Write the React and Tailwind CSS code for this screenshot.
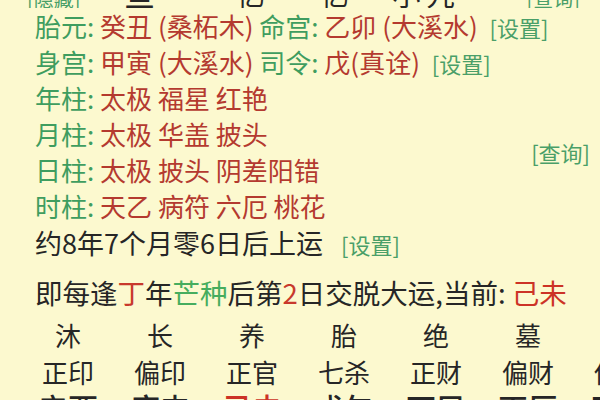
export default function App() {
  const lab = "text-[#3f9d5f]";
  const val = "text-[#b43a2f]";
  const link = "text-[#4a9f68] text-[22px] leading-none ml-[6px]";
  const row = "h-[36px] leading-[36px]";
  const cols = ["沐", "长", "养", "胎", "绝", "墓", "死"];
  const shen = ["正印", "偏印", "正官", "七杀", "正财", "偏财", "伤官"];
  const yun = ["辛酉", "庚申", "己未", "戊午", "丁巳", "丙辰", "乙卯"];
  return (
    <div className="relative w-[600px] h-[400px] overflow-hidden bg-[#fcf9cf] font-['Noto_Sans_CJK_SC',sans-serif] text-[26px] text-[#262626] whitespace-nowrap">
      <div className="h-[8px] overflow-hidden flex items-end leading-[26px]">
        <span className="text-[#4a9f68] text-[20px] leading-[20px] ml-[27px] mb-[-1px]">[隐藏]</span>
        <span className="ml-[44px] font-bold text-[30px] leading-[30px] mb-[-1px]">旦</span>
        <span className="ml-[82px] text-[28px] leading-[28px]">忆</span>
        <span className="ml-[56px] text-[28px] leading-[28px]">忆</span>
        <span className="ml-[44px] text-[28px] leading-[28px]">小</span>
        <span className="ml-[6px] text-[28px] leading-[28px]">九</span>
        <span className="ml-[72px] text-[#4a9f68] text-[20px] leading-[20px] mb-[-1px]">[查询]</span>
      </div>
      <div className="pl-[35px]">
        <div className={row}>
          <span className={lab}>胎元:</span> <span className={val}>癸丑 (桑柘木)</span>{" "}
          <span className={lab}>命宫:</span> <span className={val}>乙卯 (大溪水)</span>{" "}
          <span className={link}>[设置]</span>
        </div>
        <div className={row}>
          <span className={lab}>身宫:</span> <span className={val}>甲寅 (大溪水)</span>{" "}
          <span className={lab}>司令:</span> <span className={val}>戊(真诠)</span>{" "}
          <span className={link}>[设置]</span>
        </div>
        <div className={row}>
          <span className={lab}>年柱:</span> <span className={val}>太极 福星 红艳</span>
        </div>
        <div className={row}>
          <span className={lab}>月柱:</span> <span className={val}>太极 华盖 披头</span>
        </div>
        <div className={row}>
          <span className={lab}>日柱:</span> <span className={val}>太极 披头 阴差阳错</span>
        </div>
        <div className={row}>
          <span className={lab}>时柱:</span> <span className={val}>天乙 病符 六厄 桃花</span>
        </div>
        <div className={row + " mt-[1px] text-[27px]"}>
          约8年7个月零6日后上运{" "}
          <span className="text-[#4a9f68] text-[22px] leading-none ml-[12px]">[设置]</span>
        </div>
        <div className={row + " mt-[13px] text-[27.5px]"}>
          即每逢<span className="text-[#c8392c]">丁</span>年
          <span className="text-[#46ad5e]">芒种</span>后第
          <span className="text-[#c8392c]">2</span>日交脱大运,当前:{" "}
          <span className="text-[#cc3326]">己未</span>
        </div>
      </div>
      <div className="grid grid-cols-[repeat(7,92px)] auto-rows-[36px] pl-[22px] mt-[7px] text-center leading-[36px]">
        {cols.map((c) => (
          <div key={c}>{c}</div>
        ))}
        {shen.map((c) => (
          <div key={c} className="mt-[1px]">{c}</div>
        ))}
        {yun.map((c, i) => (
          <div
            key={c}
            className={
              i === 2
                ? "text-[30px] font-medium text-[#cc3326]"
                : "text-[30px] font-medium"
            }
          >
            {c}
          </div>
        ))}
      </div>
      <div className="absolute right-[10px] top-[137px] text-[#4a9f68] text-[22px] leading-[30px]">[查询]</div>
    </div>
  );
}
